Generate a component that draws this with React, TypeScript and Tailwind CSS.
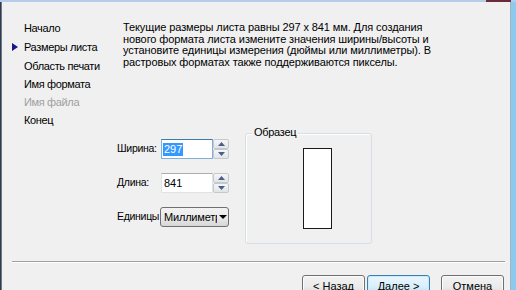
import React from "react";

function Spin() {
  return (
    <div className="flex flex-col w-[16px] h-[20px] gap-[0px]">
      {[0, 1].map((i) => (
        <div
          key={i}
          className="h-[10px] flex items-center justify-center border border-[#c5c9cf] rounded-[2px] bg-gradient-to-b from-[#f6f6f6] to-[#e2e4e8]"
        >
          <svg width="7" height="4" viewBox="0 0 7 4">
            {i === 0 ? (
              <polygon points="3.5,0 7,4 0,4" fill="#4a5f86" />
            ) : (
              <polygon points="0,0 7,0 3.5,4" fill="#4a5f86" />
            )}
          </svg>
        </div>
      ))}
    </div>
  );
}

function Btn({ children, def }: { children: React.ReactNode; def?: boolean }) {
  return (
    <div
      className={
        def
          ? "w-[63px] h-[23px] rounded-[3px] border border-[#3c7fb1] bg-gradient-to-b from-[#eaf6fd] via-[#d9f0fc] to-[#a7d9f5] flex items-center justify-center shadow-[inset_0_0_0_1px_#c8ecfc]"
          : "w-[63px] h-[23px] rounded-[3px] border border-[#707070] bg-gradient-to-b from-[#f2f2f2] via-[#ebebeb] to-[#d4d4d4] flex items-center justify-center shadow-[inset_0_0_0_1px_#fcfcfc]"
      }
    >
      {children}
    </div>
  );
}

export default function App() {
  return (
    <div className="w-[516px] h-[290px] overflow-hidden flex flex-col bg-[#f0f0f0] text-[11px] text-black font-['Liberation_Sans',Arial,sans-serif]">
      <div className="h-[3px] bg-[#b4cdea] flex justify-end">
        <div className="w-[25px] h-[2px] bg-[#6a2c3c] mr-[5px]" />
      </div>
      <div className="flex-1 flex">
        <div className="w-[1px] bg-[#2f3b4b]" />
        <div className="w-[1px] bg-[#6e7a8a]" />
        <div className="flex-1 flex flex-col">
          {/* top section */}
          <div className="flex pt-[17px]">
            <div className="w-[121px] flex flex-col tracking-[-0.35px]">
              {[
                { t: "Начало", m: "" },
                { t: "Размеры листа", m: "mt-[1px]", a: true },
                { t: "Область печати", m: "mt-[1px]" },
                { t: "Имя формата", m: "" },
                { t: "Имя файла", m: "", g: true },
                { t: "Конец", m: "" },
              ].map((it) => (
                <div key={it.t} className={"flex items-center pl-[10px] h-[18px] leading-[18px] " + it.m}>
                  <div className="w-[12px] flex items-center">
                    {it.a && (
                      <svg width="6" height="8" viewBox="0 0 6 8">
                        <polygon points="0,0 6,4 0,8" fill="#17168a" />
                      </svg>
                    )}
                  </div>
                  <span className={it.g ? "text-[#a0a0a0] whitespace-nowrap" : "whitespace-nowrap"}>{it.t}</span>
                </div>
              ))}
            </div>
            <div className="pt-[3px] leading-[11.5px] whitespace-nowrap tracking-[-0.1px]">
              Текущие размеры листа равны 297 x 841 мм. Для создания
              <br />
              нового формата листа измените значения ширины/высоты и
              <br />
              установите единицы измерения (дюймы или миллиметры). В
              <br />
              растровых форматах также поддерживаются пикселы.
            </div>
          </div>

          {/* form section */}
          <div className="flex pl-[115px] mt-[4px]">
            <div className="w-[112px] flex flex-col pt-[6px] gap-[14px]">
              <div className="flex items-center h-[20px]">
                <div className="w-[44px] text-[10.5px] tracking-[-0.3px] whitespace-nowrap">Ширина:</div>
                <div className="flex w-[68px] h-[20px]">
                  <div className="flex-1 border border-[#7fb0dc] border-t-[#3d7bad] bg-white flex items-center pl-[1px]">
                    <span className="bg-[#3399ff] text-white px-[1px] leading-[13px]">297</span>
                  </div>
                  <Spin />
                </div>
              </div>
              <div className="flex items-center h-[20px]">
                <div className="w-[44px] text-[10.5px] tracking-[-0.3px] whitespace-nowrap">Длина:</div>
                <div className="flex w-[68px] h-[20px]">
                  <div className="flex-1 border border-[#dfe3e8] border-t-[#abadb3] bg-white flex items-center pl-[2px]">
                    841
                  </div>
                  <Spin />
                </div>
              </div>
              <div className="flex items-center h-[20px]">
                <div className="w-[43px] text-[10.5px] tracking-[-0.3px] whitespace-nowrap">Единицы</div>
                <div className="w-[69px] h-[20px] rounded-[3px] border border-[#707070] bg-gradient-to-b from-[#f2f2f2] via-[#ebebeb] to-[#d6d6d6] flex items-center overflow-hidden pl-[3px]">
                  <span className="w-[53px] overflow-hidden whitespace-nowrap tracking-[-0.2px]">Миллиметры</span>
                  <svg width="8" height="4" viewBox="0 0 8 4" className="ml-[2px]">
                    <polygon points="0,0 8,0 4,4" fill="#000" />
                  </svg>
                </div>
              </div>
            </div>
            <div className="ml-[16px] relative w-[127px] h-[111px] border border-[#d5dfe5] rounded-[3px] shadow-[inset_1px_1px_0_#ffffff]">
              <div className="absolute left-[6px] top-[-8px] bg-[#f0f0f0] px-[2px] leading-[13px] tracking-[-0.3px]">Образец</div>
              <div className="ml-[57px] mt-[14px] w-[29px] h-[81px] border-[1.5px] border-[#1a1a1a] bg-white" />
            </div>
          </div>

          {/* separator */}
          <div className="mt-[17px] ml-[10px] mr-[5px] border-t border-[#a0a0a0] border-b border-b-[#ffffff]" />

          {/* buttons */}
          <div className="flex justify-end mt-[12px] mr-[6px]">
            <Btn>&lt; Назад</Btn>
            <div className="w-[2px]" />
            <Btn def>Далее &gt;</Btn>
            <div className="w-[11px]" />
            <Btn>Отмена</Btn>
          </div>
        </div>
        <div className="w-[1px] bg-[#a6b2be]" />
        <div className="w-[5px] bg-[#8ccbee]" />
      </div>
    </div>
  );
}
